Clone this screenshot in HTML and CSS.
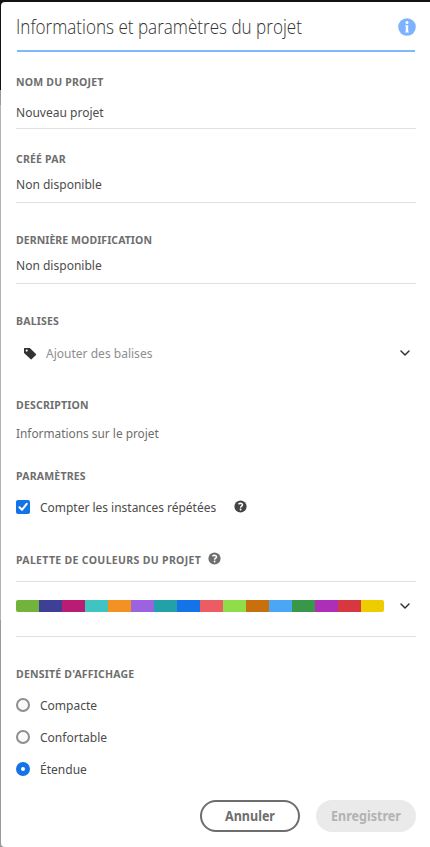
FILE: index.html
```html
<!DOCTYPE html>
<html lang="fr">
<head>
<meta charset="utf-8">
<title>Informations et paramètres du projet</title>
<link rel="stylesheet" href="styles.css">
</head>
<body>
<main class="panel">
  <header class="header">
    <h1 class="title">Informations et paramètres du projet</h1>
    <svg class="info" width="18" height="18" viewBox="0 0 18 18"><circle cx="9" cy="9" r="8.8" fill="#7cb2ff"/><circle cx="9" cy="4.6" r="1.5" fill="#fff"/><path d="M7.2 7.2h3v6.2h.6v1H7.2v-1h.6V8.2h-.6z" fill="#fff"/></svg>
  </header>

  <section class="field name">
    <h2 class="label">Nom du projet</h2>
    <div class="value">Nouveau projet</div>
  </section>
  <section class="field created">
    <h2 class="label">Créé par</h2>
    <div class="value">Non disponible</div>
  </section>
  <section class="field modified">
    <h2 class="label tight">Dernière modification</h2>
    <div class="value">Non disponible</div>
  </section>
  <section class="tags">
    <h2 class="label">Balises</h2>
    <div class="tag-row">
      <svg class="tag" width="14" height="14" viewBox="0 0 14 14"><path fill-rule="evenodd" d="M1 1.5Q1 1 1.5 1H6.8L13 7.1Q13.3 7.5 13 7.9L8.5 12.3Q8.1 12.7 7.7 12.3L1 6zM3.7 2.5a1.1 1.1 0 1 0 0 2.2a1.1 1.1 0 1 0 0-2.2z" fill="#323232"/></svg>
      <span class="placeholder">Ajouter des balises</span>
      <svg class="chevron" width="12" height="12" viewBox="0 0 12 12"><path d="M2 4l4 4 4-4" fill="none" stroke="#323232" stroke-width="1.5" stroke-linecap="round" stroke-linejoin="round"/></svg>
    </div>
  </section>
  <section class="description">
    <h2 class="label">Description</h2>
    <div class="value muted info-text">Informations sur le projet</div>
  </section>
  <section class="settings">
    <h2 class="label">Paramètres</h2>
    <div class="option">
      <svg class="control" width="14" height="14" viewBox="0 0 14 14"><rect width="14" height="14" rx="2" fill="#1473e6"/><path d="M3.5 7.3L6 9.9l4.7-6" fill="none" stroke="#fff" stroke-width="2" stroke-linecap="round" stroke-linejoin="round"/></svg>
      <span class="option-text repeat">Compter les instances répétées</span>
      <svg class="help dark" width="13" height="13" viewBox="0 0 13 13"><circle cx="6.5" cy="6.5" r="6.1" fill="#444"/><path d="M4.5 4.2Q5.3 3.2 6.6 3.2Q8.5 3.3 8.5 4.8Q8.5 5.7 7.4 6.4Q6.6 6.8 6.6 7.7" fill="none" stroke="#fff" stroke-width="1.5"/><circle cx="6.6" cy="9.5" r=".95" fill="#fff"/></svg>
    </div>
  </section>
  <section class="palette">
    <div class="label-row">
      <h2 class="label loose">Palette de couleurs du projet</h2>
      <svg class="help" width="13" height="13" viewBox="0 0 13 13"><circle cx="6.5" cy="6.5" r="6.1" fill="#6e6e6e"/><path d="M4.5 4.2Q5.3 3.2 6.6 3.2Q8.5 3.3 8.5 4.8Q8.5 5.7 7.4 6.4Q6.6 6.8 6.6 7.7" fill="none" stroke="#fff" stroke-width="1.5"/><circle cx="6.6" cy="9.5" r=".95" fill="#fff"/></svg>
    </div>
    <div class="palette-row">
      <div class="swatches">
        <i class="c1"></i><i class="c2"></i><i class="c3"></i><i class="c4"></i><i class="c5"></i><i class="c6"></i><i class="c7"></i><i class="c8"></i><i class="c9"></i><i class="c10"></i><i class="c11"></i><i class="c12"></i><i class="c13"></i><i class="c14"></i><i class="c15"></i><i class="c16"></i>
      </div>
      <svg class="chevron" width="12" height="12" viewBox="0 0 12 12"><path d="M2 4l4 4 4-4" fill="none" stroke="#323232" stroke-width="1.5" stroke-linecap="round" stroke-linejoin="round"/></svg>
    </div>
  </section>
  <section class="density">
    <h2 class="label">Densité d'affichage</h2>
    <div class="option"><span class="radio"></span><span class="option-text">Compacte</span></div>
    <div class="option"><span class="radio"></span><span class="option-text">Confortable</span></div>
    <div class="option"><span class="radio checked"></span><span class="option-text">Étendue</span></div>
  </section>
  <footer class="actions">
    <button class="btn cancel"><span class="btn-text">Annuler</span></button>
    <button class="btn save" disabled><span class="btn-text">Enregistrer</span></button>
  </footer>
</main>
</body>
</html>
```
FILE: styles.css
```css
* { box-sizing: border-box; }
html { background: #b0b0b0; }
body {
  margin: 0;
  height: 847px;
  padding: 2px 0 0 1px;
  overflow: hidden;
  background: linear-gradient(#141213 0 90px, #999 90px 105px, #b4b4b4 105px 620px, #999 620px);
  font-family: "Noto Sans", "Open Sans", sans-serif;
  font-size: 13px;
  color: #4b4b4b;
}
h1, h2 { margin: 0; }
svg { display: block; flex: none; }
.panel {
  height: 845px;
  padding: 0 14px 0 15px;
  background: #fff;
  border-radius: 4px 0 0 4px;
}
.header {
  display: flex;
  justify-content: space-between;
  height: 50px;
  margin: 0 1px;
  border-bottom: 2px solid #7fb8ff;
}
.title {
  font: 300 20px/50px "Open Sans", "Noto Sans", sans-serif;
  color: #323232;
  margin-left: -1px;
  white-space: nowrap;
  transform: scaleX(0.854);
  transform-origin: left;
}
.info { margin: 16px -1px 0 0; }
.label {
  font-size: 10.5px;
  line-height: 16px;
  font-weight: 700;
  letter-spacing: 0.2px;
  text-transform: uppercase;
  color: #6e6e6e;
  white-space: nowrap;
}
.label.tight { letter-spacing: 0.07px; }
.label.loose { letter-spacing: 0.33px; }
.value, .placeholder, .option-text {
  white-space: nowrap;
  transform: scaleX(0.925);
  transform-origin: left;
}
.value { line-height: 20px; }
.info-text { transform: scaleX(0.912); }
.muted { color: #6e6e6e; }
.field { border-bottom: 1px solid #e1e1e1; }
.name { height: 77px; padding-top: 22px; }
.name .value { margin-top: 12px; }
.created { height: 74px; padding-top: 22px; }
.modified { height: 81px; padding-top: 29px; }
.created .value, .modified .value { margin-top: 7px; }
.tags { padding-top: 29px; }
.tag-row { display: flex; align-items: center; height: 20px; margin-top: 14px; padding: 0 5px 0 7px; }
.tag { margin-top: 1px; }
.placeholder { margin-left: 9px; flex: 1; color: #8e8e8e; }
.description { padding-top: 34px; }
.description .value { margin-top: 10px; }
.settings { padding-top: 25px; }
.option { display: flex; align-items: center; height: 32px; }
.settings .option { margin-top: 7px; }
.control { margin-right: 10px; }
.option-text { margin-left: -0.5px; }
.repeat { width: 177px; transform: scaleX(0.92); }
.help.dark { margin: 0 0 2px 17px; }
.palette { padding-top: 29px; }
.label-row { display: flex; gap: 7px; }
.palette-row {
  display: flex;
  align-items: center;
  justify-content: space-between;
  height: 56px;
  margin-top: 13px;
  padding: 0 5px 6px 0;
  border: solid #e1e1e1;
  border-width: 1px 0;
}
.swatches { display: flex; width: 368px; height: 12px; border-radius: 2px; overflow: hidden; }
.swatches i { flex: 1; }
.c1 { background: #72b33c; }
.c2 { background: #3d4095; }
.c3 { background: #b91d73; }
.c4 { background: #40c4c1; }
.c5 { background: #f19223; }
.c6 { background: #9b63df; }
.c7 { background: #22a2a8; }
.c8 { background: #1473e6; }
.c9 { background: #eb5c63; }
.c10 { background: #8fdd49; }
.c11 { background: #c86f0e; }
.c12 { background: #4ba6f5; }
.c13 { background: #389748; }
.c14 { background: #ad2fb8; }
.c15 { background: #d7373f; }
.c16 { background: #edcc00; }
.density { padding-top: 29px; }
.density .label { margin-bottom: 7px; }
.radio {
  width: 14px;
  height: 14px;
  margin-right: 10px;
  border: 2px solid #8e8e8e;
  border-radius: 50%;
  background: #fafafa;
}
.radio.checked { border: 5px solid #1473e6; background: #fff; }
.actions { display: flex; justify-content: flex-end; gap: 16px; margin-top: 15px; }
.btn {
  width: 100px;
  height: 32px;
  padding: 0;
  border: 2px solid #6e6e6e;
  border-radius: 16px;
  background: #fff;
  font: 700 14px/26px "Noto Sans", sans-serif;
  color: #6e6e6e;
}
.btn-text { display: block; transform: scaleX(0.895); }
.save { border-color: #eaeaea; background: #eaeaea; color: #b3b3b3; }
```
